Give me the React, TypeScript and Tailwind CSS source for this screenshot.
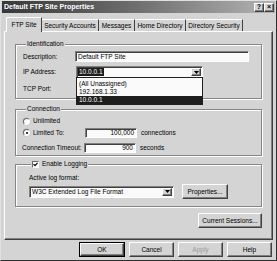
import React from "react";

const font = "font-['Liberation_Sans',Arial,sans-serif]";
const raised =
  "border border-t-white border-l-white border-b-[#404040] border-r-[#404040] shadow-[inset_-1px_-1px_0_#808080] bg-[#d4d4d4]";
const sunken =
  "border border-t-[#808080] border-l-[#808080] border-b-white border-r-white shadow-[inset_1px_1px_0_#404040]";
const etched =
  "border border-[#868686] shadow-[inset_1px_1px_0_#fff,1px_1px_0_#fff] rounded-none";

function Arrow() {
  return (
    <div className={`${raised} w-[10px] h-full flex items-center justify-center shrink-0`}>
      <svg width="5" height="3" viewBox="0 0 5 3">
        <path d="M0 0h5L2.5 3z" fill="#000" />
      </svg>
    </div>
  );
}

function Radio({ checked }: { checked?: boolean }) {
  return (
    <div className="w-[7px] h-[7px] rounded-full bg-white border border-t-[#6a6a6a] border-l-[#6a6a6a] border-b-white border-r-white shadow-[0_0_0_0.5px_#bbb] flex items-center justify-center">
      {checked && <div className="w-[2px] h-[2px] rounded-full bg-black" />}
    </div>
  );
}

function Button({ label, w, def, disabled }: { label: string; w: string; def?: boolean; disabled?: boolean }) {
  return (
    <div className={`${w} h-[15px] ${def ? "border border-black" : ""} flex`}>
      <div
        className={`${raised} flex-1 flex items-center justify-center ${disabled ? "text-[#9a9a9a]" : "text-black"}`}
      >
        {label}
      </div>
    </div>
  );
}

export default function App() {
  const tabs = ["Security Accounts", "Messages", "Home Directory", "Directory Security"];
  const tabW = ["w-[57px]", "w-[36px]", "w-[51px]", "w-[57px]"];
  return (
    <div className={`${font} text-[6.5px] leading-[8px] text-black w-[277px] h-[261px] bg-[#d4d4d4] border border-t-[#e0e0e0] border-l-[#e0e0e0] border-b-[#303030] border-r-[#303030] flex flex-col overflow-hidden`}>
      {/* title bar */}
      <div className="h-[12px] mx-[1px] mt-[0px] bg-gradient-to-r from-[#383838] via-[#707070] to-[#b4b4b4] flex items-center pl-[2px] pr-[1px]">
        <span className="text-white font-bold text-[7px] flex-1">Default FTP Site Properties</span>
        <div className={`${raised} w-[10px] h-[9px] flex items-center justify-center font-bold text-[7px]`}>?</div>
        <div className={`${raised} w-[10px] h-[9px] flex items-center justify-center font-bold text-[7px]`}>×</div>
      </div>

      {/* tabs */}
      <div className="flex items-end h-[16px] mt-[2px] pl-[5px] relative z-10">
        <div className="w-[36px] h-[15px] bg-[#d4d4d4] border-t border-l border-t-white border-l-white border-r border-r-[#404040] flex items-center justify-center -mb-[1px] pb-[1px]">
          FTP Site
        </div>
        {tabs.map((t, i) => (
          <div
            key={t}
            className={`${tabW[i]} h-[12px] border-t border-t-white border-r border-r-[#404040] flex items-center justify-center`}
          >
            {t}
          </div>
        ))}
      </div>

      {/* panel */}
      <div className="mx-[3px] h-[209px] border border-t-white border-l-white border-b-[#404040] border-r-[#404040] shadow-[inset_-1px_-1px_0_#808080] px-[10px] pt-[8px] relative">
        {/* Identification */}
        <fieldset className={`${etched} h-[59px] px-[7px]`}>
          <legend className="ml-[3px] px-[1px] bg-[#d4d4d4] leading-[8px]">Identification</legend>
          <div className="flex items-center h-[11px] mt-[3px]">
            <span className="w-[52px]">Description:</span>
            <div className={`${sunken} bg-[#fafafa] w-[174px] h-[11px] flex items-center pl-[2px]`}>Default FTP Site</div>
          </div>
          <div className="flex items-center h-[12px] mt-[4px]">
            <span className="w-[53px]">IP Address:</span>
            <div className={`${sunken} bg-[#fafafa] w-[127px] h-[12px] flex items-center p-[1px]`}>
              <div className="flex-1 h-full flex items-center">
                <span className="bg-[#1e1e1e] text-white px-[1px] h-[8px] flex items-center">10.0.0.1</span>
              </div>
              <Arrow />
            </div>
          </div>
          <div className="flex items-center h-[11px] mt-[5px]">
            <span className="w-[53px]">TCP Port:</span>
            <div className={`${sunken} bg-[#fafafa] w-[40px] h-[11px]`} />
          </div>
        </fieldset>

        {/* dropdown list overlay */}
        <div className="absolute left-[71px] top-[45px] w-[127px] h-[28px] bg-[#fafafa] border border-[#202020] flex flex-col pt-[2px] z-20">
          <div className="h-[8px] pl-[2px] flex items-center">(All Unassigned)</div>
          <div className="h-[8px] pl-[2px] flex items-center">192.168.1.33</div>
          <div className="h-[8px] pl-[2px] flex items-center bg-[#1e1e1e] text-white">10.0.0.1</div>
        </div>

        {/* Connection */}
        <fieldset className={`${etched} h-[51px] px-[7px] mt-[6px]`}>
          <legend className="ml-[3px] px-[1px] bg-[#d4d4d4] leading-[8px]">Connection</legend>
          <div className="flex items-center h-[10px] mt-[3px] gap-[3px]">
            <Radio />
            <span>Unlimited</span>
          </div>
          <div className="flex items-center h-[11px] mt-[1px]">
            <div className="flex items-center gap-[3px] w-[62px]">
              <Radio checked />
              <span>Limited To:</span>
            </div>
            <div className={`${sunken} bg-[#fafafa] w-[52px] h-[10px] flex items-center justify-end pr-[2px]`}>100,000</div>
            <span className="ml-[4px]">connections</span>
          </div>
          <div className="flex items-center h-[10px] mt-[5px]">
            <span className="w-[62px] -ml-[1px]">Connection Timeout:</span>
            <div className={`${sunken} bg-[#fafafa] w-[52px] h-[10px] flex items-center justify-end pr-[2px]`}>900</div>
            <span className="ml-[4px]">seconds</span>
          </div>
        </fieldset>

        {/* Logging */}
        <fieldset className={`${etched} h-[47px] px-[13px] mt-[4px]`}>
          <legend className="ml-[2px] px-[1px] bg-[#d4d4d4] leading-[8px] flex items-center gap-[3px]">
            <div className="w-[7px] h-[7px] bg-white border border-t-[#6a6a6a] border-l-[#6a6a6a] border-b-white border-r-white flex items-center justify-center">
              <svg width="5" height="5" viewBox="0 0 5 5">
                <path d="M0.5 2.2L2 3.7L4.6 0.8" stroke="#000" strokeWidth="1.2" fill="none" />
              </svg>
            </div>
            <span>Enable Logging</span>
          </legend>
          <div className="h-[8px] mt-[6px] flex items-center">Active log format:</div>
          <div className="flex items-center mt-[2px] gap-[8px]">
            <div className={`${sunken} bg-[#fafafa] w-[145px] h-[12px] flex items-center p-[1px]`}>
              <span className="flex-1 pl-[1px]">W3C Extended Log File Format</span>
              <Arrow />
            </div>
            <Button label="Properties..." w="w-[46px]" />
          </div>
        </fieldset>

        <div className="flex justify-end mt-[6px]">
          <Button label="Current Sessions..." w="w-[64px]" />
        </div>
      </div>

      {/* bottom buttons */}
      <div className="flex justify-end gap-[4px] pr-[4px] mt-[2px]">
        <Button label="OK" w="w-[46px]" def />
        <Button label="Cancel" w="w-[45px]" />
        <Button label="Apply" w="w-[45px]" disabled />
        <Button label="Help" w="w-[45px]" />
      </div>
    </div>
  );
}
